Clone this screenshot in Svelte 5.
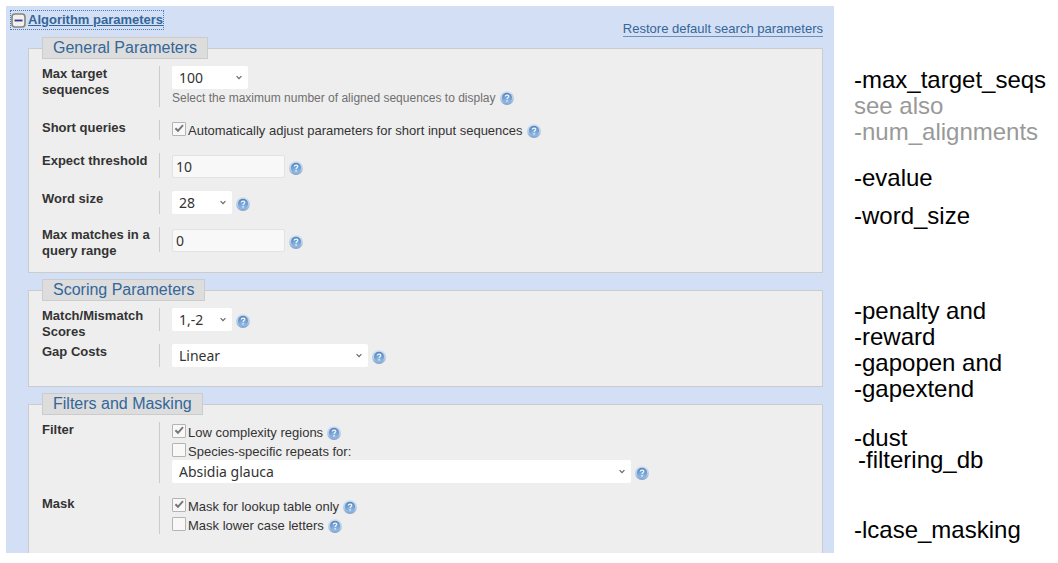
<script>
  const defaults = { target: '100', expect: '10', word: '28', range: '0', scores: '1,-2', gap: 'Linear', species: 'Absidia glauca' };
  const defaultChecks = { short: true, low: true, repeats: false, lookup: true, lower: false };
  let values = $state({ ...defaults });
  let checks = $state({ ...defaultChecks });

  function restore(event) {
    event.preventDefault();
    values = { ...defaults };
    checks = { ...defaultChecks };
  }
</script>

{#snippet help()}
  <button class="help" type="button">
    <svg viewBox="0 0 14 14" width="14" height="14" aria-hidden="true">
      <defs>
        <radialGradient id="ball" cx="50%" cy="90%" r="85%">
          <stop offset="0" stop-color="#94c4f0" />
          <stop offset="1" stop-color="#5b86bd" />
        </radialGradient>
        <linearGradient id="rim" x1="0" y1="0" x2="0" y2="1">
          <stop offset="0" stop-color="#d5e3f2" />
          <stop offset="0.6" stop-color="#b3cbe6" />
          <stop offset="1" stop-color="#7f9fc6" />
        </linearGradient>
      </defs>
      <circle cx="7" cy="7" r="7" fill="url(#rim)" />
      <circle cx="7" cy="6.8" r="5" fill="url(#ball)" />
      <path d="M5.3 5.6C5.3 3.6 8.8 3.6 8.8 5.4C8.8 6.6 7.1 6.5 7.1 8" fill="none" stroke="#eef5fc" stroke-width="1.3" />
      <circle cx="7.1" cy="9.8" r="0.8" fill="#eef5fc" />
    </svg>
  </button>
{/snippet}

{#snippet dropdown(id, key, size, options)}
  <span class="select {size}">
    <select {id} bind:value={values[key]}>
      {#each options as option}<option>{option}</option>{/each}
    </select>
    <svg viewBox="0 0 8 6" width="8" height="6" aria-hidden="true">
      <path d="M1.6 1.2L4 3.6L6.4 1.2" fill="none" stroke="#666" stroke-width="1.2" />
    </svg>
  </span>
{/snippet}

{#snippet check(id, key, text, withHelp)}
  <div class="check">
    <span class="box">
      <input type="checkbox" {id} bind:checked={checks[key]} />
      {#if checks[key]}
        <svg viewBox="0 0 14 14" width="14" height="14" aria-hidden="true">
          <path d="M3.4 6.2L6 8.8L11 3.2" fill="none" stroke="#777" stroke-width="2" />
        </svg>
      {/if}
    </span>
    <label for={id}>{text}</label>
    {#if withHelp}{@render help()}{/if}
  </div>
{/snippet}

<main class="page">
  <form class="panel">
    <header>
      <a class="toggle" href="#params">
        <svg viewBox="0 0 15 15" width="15" height="15" aria-hidden="true">
          <rect x="1" y="1" width="13" height="13" rx="3" fill="#f1f0ea" stroke="#85857c" stroke-width="1.6" />
          <path d="M3.5 7.5H11.5" stroke="#35359a" stroke-width="1.8" />
        </svg>
        <span>Algorithm parameters</span>
      </a>
      <a class="restore" href="#restore" onclick={restore}>Restore default search parameters</a>
    </header>

    <div class="sections" id="params">
      <fieldset>
        <legend>General Parameters</legend>
        <div class="row">
          <label class="name" for="target">Max target sequences</label>
          <div class="field">
            {@render dropdown('target', 'target', 'medium', ['10', '50', '100', '250', '500'])}
            <div class="hint">
              <span>Select the maximum number of aligned sequences to display</span>
              {@render help()}
            </div>
          </div>
        </div>
        <div class="row">
          <span class="name">Short queries</span>
          <div class="field">
            {@render check('short', 'short', 'Automatically adjust parameters for short input sequences', true)}
          </div>
        </div>
        <div class="row">
          <label class="name" for="expect">Expect threshold</label>
          <div class="field entry">
            <div class="line">
              <input class="text" id="expect" type="text" bind:value={values.expect} />
              {@render help()}
            </div>
          </div>
        </div>
        <div class="row">
          <label class="name" for="word">Word size</label>
          <div class="field">
            <div class="line">
              {@render dropdown('word', 'word', 'small', ['16', '20', '24', '28', '32'])}
              {@render help()}
            </div>
          </div>
        </div>
        <div class="row">
          <label class="name" for="range">Max matches in a query range</label>
          <div class="field entry">
            <div class="line">
              <input class="text" id="range" type="text" bind:value={values.range} />
              {@render help()}
            </div>
          </div>
        </div>
      </fieldset>

      <fieldset class="scoring">
        <legend>Scoring Parameters</legend>
        <div class="row">
          <label class="name" for="scores">Match/Mismatch Scores</label>
          <div class="field">
            <div class="line">
              {@render dropdown('scores', 'scores', 'small', ['1,-2', '1,-3', '1,-4'])}
              {@render help()}
            </div>
          </div>
        </div>
        <div class="row">
          <label class="name" for="gap">Gap Costs</label>
          <div class="field">
            <div class="line">
              {@render dropdown('gap', 'gap', 'large', ['Linear'])}
              {@render help()}
            </div>
          </div>
        </div>
      </fieldset>

      <fieldset class="filters">
        <legend>Filters and Masking</legend>
        <div class="row">
          <span class="name">Filter</span>
          <div class="field">
            {@render check('low', 'low', 'Low complexity regions', true)}
            {@render check('repeats', 'repeats', 'Species-specific repeats for:', false)}
            <div class="line">
              {@render dropdown('species', 'species', 'wide', ['Absidia glauca'])}
              {@render help()}
            </div>
          </div>
        </div>
        <div class="row">
          <span class="name">Mask</span>
          <div class="field">
            {@render check('lookup', 'lookup', 'Mask for lookup table only', true)}
            {@render check('lower', 'lower', 'Mask lower case letters', true)}
          </div>
        </div>
      </fieldset>
    </div>
  </form>

  <aside>
    <div class="note">
      <p>-max_target_seqs</p>
      <p class="muted">see also</p>
      <p class="muted">-num_alignments</p>
    </div>
    <div class="note evalue"><p>-evalue</p></div>
    <div class="note word"><p>-word_size</p></div>
    <div class="note costs">
      <p>-penalty and</p>
      <p>-reward</p>
      <p>-gapopen and</p>
      <p>-gapextend</p>
    </div>
    <div class="note masks">
      <p>-dust</p>
      <p class="indent">-filtering_db</p>
    </div>
    <div class="note lcase"><p>-lcase_masking</p></div>
  </aside>
</main>

<style>
  :global(body) {
    margin: 0;
    background: #fff;
  }
  .page {
    display: grid;
    grid-template-columns: minmax(0, 1fr) 204px;
    column-gap: 20px;
    align-items: start;
    padding: 6px 0 6px 6px;
    font-family: "Liberation Sans", Arial, sans-serif;
    font-size: 13px;
    line-height: 16px;
    color: #333;
  }
  .page * {
    box-sizing: border-box;
  }
  .panel {
    background: #d3dff5;
  }
  header {
    display: flex;
    justify-content: space-between;
    align-items: flex-start;
    height: 31px;
    padding: 4px 11px 0 4px;
  }
  a {
    color: #336699;
  }
  .toggle {
    display: flex;
    align-items: center;
    gap: 2px;
    height: 20px;
    border: 1px dotted #4a7ab0;
    font-weight: bold;
    text-decoration: none;
  }
  .toggle span {
    text-decoration: underline;
  }
  .restore {
    margin-top: 11px;
    line-height: 15px;
    text-decoration: none;
    border-bottom: 1px solid #6f92ba;
  }
  .sections {
    display: flex;
    flex-direction: column;
    gap: 6px;
    padding: 0 11px 0 22px;
  }
  fieldset {
    min-width: 0;
    margin: 0;
    padding: 7px 13px 13px;
    border: 1px solid #ccc;
    background: #eee;
  }
  legend {
    height: 22px;
    padding: 0 10px;
    border: 1px solid #ccc;
    background: #ddd;
    color: #336699;
    font-size: 16px;
    line-height: 20px;
  }
  .row {
    display: grid;
    grid-template-columns: 117px minmax(0, 1fr);
    align-items: start;
  }
  .row + .row {
    margin-top: 13px;
  }
  .scoring {
    padding-bottom: 19px;
  }
  .scoring .row + .row {
    margin-top: 4px;
  }
  .filters {
    padding-bottom: 19px;
    border-bottom: 0;
  }
  .name {
    padding-right: 4px;
    font-weight: bold;
  }
  .field {
    padding-left: 12px;
    border-left: 1px solid #ccc;
  }
  .entry {
    padding-top: 2px;
  }
  .line {
    display: flex;
    align-items: center;
    gap: 4px;
  }
  .line .help {
    margin-top: 2px;
  }
  .hint {
    display: flex;
    align-items: center;
    gap: 4px;
    height: 18px;
    color: #707070;
    font-size: 12px;
  }
  .check {
    display: flex;
    align-items: center;
    height: 20px;
  }
  .filters .check {
    height: 19px;
  }
  .check label {
    margin: 2px 4px 0 2px;
  }
  .check .help {
    margin-top: 2px;
  }
  .box {
    display: grid;
    width: 14px;
    height: 14px;
    margin-bottom: 2px;
  }
  .box > * {
    grid-area: 1 / 1;
  }
  .box svg {
    pointer-events: none;
  }
  .box input {
    appearance: none;
    width: 14px;
    height: 14px;
    margin: 0;
    border: 1px solid #b4b4b4;
    border-radius: 1px;
    background: #f8f8f8;
  }
  .help {
    display: block;
    flex: none;
    width: 14px;
    height: 14px;
    padding: 0;
    border: 0;
    background: none;
  }
  .help svg {
    display: block;
  }
  .select {
    display: grid;
    max-width: 100%;
    align-items: center;
  }
  .select > * {
    grid-area: 1 / 1;
  }
  .select svg {
    justify-self: end;
    margin-right: 5px;
    pointer-events: none;
  }
  .small {
    width: 60px;
  }
  .medium {
    width: 76px;
  }
  .large {
    width: 196px;
  }
  .wide {
    width: 459px;
  }
  select,
  .text {
    appearance: none;
    width: 100%;
    height: 23px;
    margin: 0;
    border: 0;
    border-radius: 2px;
    background: #fff;
    color: #333;
    font-family: "Noto Sans", sans-serif;
    font-size: 14px;
    line-height: 20px;
  }
  select {
    padding: 0 16px 0 7px;
  }
  .text {
    width: 113px;
    padding: 0 3px;
    border: 1px solid #e2e2e2;
    background: #f8f8f8;
  }
  aside {
    padding-top: 61px;
    color: #000;
    font-size: 24px;
    line-height: 26px;
    white-space: nowrap;
  }
  p {
    margin: 0;
  }
  .muted {
    color: #999;
  }
  .evalue {
    margin-top: 20px;
  }
  .word {
    margin-top: 12px;
  }
  .costs {
    margin-top: 69px;
  }
  .masks {
    margin-top: 25px;
    line-height: 22px;
  }
  .indent {
    padding-left: 4px;
  }
  .lcase {
    margin-top: 46px;
  }
</style>
